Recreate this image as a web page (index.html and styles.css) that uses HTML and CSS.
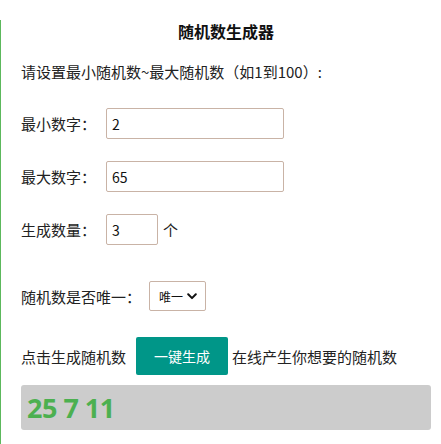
FILE: index.html
```html
<!DOCTYPE html>
<html lang="zh-CN">
<head>
<meta charset="utf-8">
<title>随机数生成器</title>
<link rel="stylesheet" href="styles.css">
</head>
<body>
<div class="tool">
  <h3 class="title">随机数生成器</h3>
  <p class="intro">请设置最小随机数~最大随机数（如1到100）:</p>
  <div class="field field-first">
    <label class="label">最小数字：</label>
    <input class="num-input" type="text" value="2">
  </div>
  <div class="field">
    <label class="label">最大数字：</label>
    <input class="num-input" type="text" value="65">
  </div>
  <div class="field">
    <label class="label">生成数量：</label>
    <input class="num-input count-input" type="text" value="3">
    <span class="unit">个</span>
  </div>
  <div class="field field-select">
    <label class="label-inline">随机数是否唯一：</label>
    <span class="select-wrap">
      <select class="unique-select">
        <option>唯一</option>
        <option>不唯一</option>
      </select>
      <svg class="chevron" width="10" height="7" viewBox="0 0 10 7" aria-hidden="true">
        <path d="M1.2 1.3 L5 5.1 L8.8 1.3" fill="none" stroke="#111" stroke-width="2" stroke-linecap="round" stroke-linejoin="round"/>
      </svg>
    </span>
  </div>
  <div class="field field-action">
    <span>点击生成随机数</span>
    <button class="gen-btn" type="button">一键生成</button>
    <span>在线产生你想要的随机数</span>
  </div>
  <div class="result">25 7 11</div>
</div>
</body>
</html>
```
FILE: styles.css
```css
html, body {
  margin: 0;
  padding: 0;
  background: #fff;
}
body {
  font-family: "Noto Sans CJK SC", "Noto Sans", sans-serif;
  font-size: 15px;
  color: #222;
}
.tool {
  border-left: 1px solid #5cb85c;
  padding: 0 10px 15px 20px;
  min-height: 444px;
  box-sizing: border-box;
}
.title {
  margin: 20px 0 0;
  font-size: 16px;
  font-weight: bold;
  line-height: 22px;
  height: 22px;
  text-align: center;
  color: #111;
}
.intro {
  margin: 20px 0 0;
  line-height: 20px;
}
.field {
  display: flex;
  align-items: center;
  margin-top: 22px;
}
.field-first {
  margin-top: 26px;
}
.label {
  width: 85px;
  flex: none;
}
.num-input {
  box-sizing: border-box;
  width: 178px;
  height: 31px;
  border: 1px solid #c9b3a6;
  border-radius: 2px;
  padding: 0 5px;
  font-family: "Noto Sans CJK SC", "Noto Sans", sans-serif;
  font-size: 14px;
  color: #111;
  outline: none;
}
.count-input {
  width: 52px;
}
.unit {
  margin-left: 5px;
  font-size: 15px;
}
.field-select {
  margin-top: 36px;
}
.label-inline {
  flex: none;
}
.select-wrap {
  position: relative;
  display: inline-block;
  margin-left: 8px;
  height: 30px;
}
.unique-select {
  -webkit-appearance: none;
  appearance: none;
  box-sizing: border-box;
  width: 57px;
  height: 30px;
  border: 1px solid #c9b3a6;
  border-radius: 2px;
  background: #fff;
  font-family: "Noto Sans CJK SC", "Noto Sans", sans-serif;
  font-size: 12px;
  color: #111;
  padding: 0 0 0 9px;
  outline: none;
}
.chevron {
  position: absolute;
  left: 38px;
  top: 12px;
  pointer-events: none;
}
.field-action {
  margin-top: 26px;
}
.gen-btn {
  margin: 0 4px 0 10px;
  width: 92px;
  height: 38px;
  border: none;
  border-radius: 2px;
  background: #009688;
  color: #fff;
  font-family: "Noto Sans CJK SC", "Noto Sans", sans-serif;
  font-size: 14px;
  padding: 0;
}
.result {
  margin-top: 10px;
  height: 45px;
  box-sizing: border-box;
  background: #cccccc;
  border-radius: 3px;
  padding-left: 6px;
  font-family: "Noto Sans", "Noto Sans CJK SC", sans-serif;
  font-size: 27px;
  font-weight: bold;
  line-height: 45px;
  color: #4cb050;
  letter-spacing: -0.5px;
}
```
